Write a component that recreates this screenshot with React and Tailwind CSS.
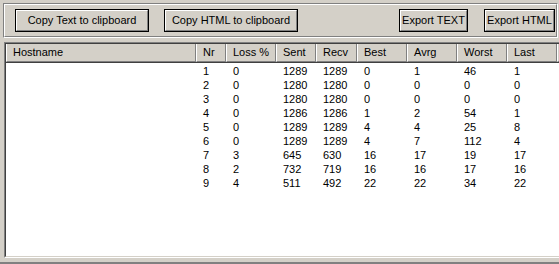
import React from "react";

const COLS = [
  { key: "host", label: "Hostname", w: "w-[190px]" },
  { key: "nr", label: "Nr", w: "w-[30px]" },
  { key: "loss", label: "Loss %", w: "w-[50px]" },
  { key: "sent", label: "Sent", w: "w-[40px]" },
  { key: "recv", label: "Recv", w: "w-[41px]" },
  { key: "best", label: "Best", w: "w-[50px]" },
  { key: "avrg", label: "Avrg", w: "w-[50px]" },
  { key: "worst", label: "Worst", w: "w-[50px]" },
  { key: "last", label: "Last", w: "w-[50px]" },
];

const ROWS = [
  ["", 1, 0, 1289, 1289, 0, 1, 46, 1],
  ["", 2, 0, 1280, 1280, 0, 0, 0, 0],
  ["", 3, 0, 1280, 1280, 0, 0, 0, 0],
  ["", 4, 0, 1286, 1286, 1, 2, 54, 1],
  ["", 5, 0, 1289, 1289, 4, 4, 25, 8],
  ["", 6, 0, 1289, 1289, 4, 7, 112, 4],
  ["", 7, 3, 645, 630, 16, 17, 19, 17],
  ["", 8, 2, 732, 719, 16, 16, 17, 16],
  ["", 9, 4, 511, 492, 22, 22, 34, 22],
];

function Button({ label, w }) {
  return (
    <div className={`${w} h-[23px] border border-black bg-[#D4D0C8]`}>
      <div className="flex h-full items-center justify-center border border-t-white border-l-white border-b-[#808080] border-r-[#808080]">
        {label}
      </div>
    </div>
  );
}

export default function App() {
  return (
    <div className="h-[264px] w-[559px] overflow-hidden bg-[#D4D0C8] text-[11px] leading-none text-black font-['Liberation_Sans',Arial,sans-serif]">
      {/* toolbar groove */}
      <div className="px-[3px] pt-[3px]">
        <div className="h-[35px] w-[555px] border border-t-[#808080] border-l-[#808080] border-b-white border-r-white">
          <div className="flex h-full items-start border border-t-white border-l-white border-b-[#808080] border-r-[#808080] pl-[10px] pt-[4px]">
            <Button label="Copy Text to clipboard" w="w-[134px]" />
            <div className="ml-[15px]">
              <Button label="Copy HTML to clipboard" w="w-[134px]" />
            </div>
            <div className="ml-[101px]">
              <Button label="Export TEXT" w="w-[69px]" />
            </div>
            <div className="ml-[16px]">
              <Button label="Export HTML" w="w-[71px]" />
            </div>
          </div>
        </div>
      </div>

      {/* list view */}
      <div className="ml-[4px] mt-[4px] h-[216px] w-[560px] border border-t-[#808080] border-l-[#808080] border-b-white border-r-white">
        <div className="h-full border border-t-[#404040] border-l-[#404040] border-b-[#D4D0C8] border-r-[#D4D0C8] bg-white">
          <div className="flex h-[19px] border-b border-b-[#404040] bg-[#D4D0C8]">
            {COLS.map((c) => (
              <div
                key={c.key}
                className={`${c.w} flex shrink-0 items-center border-l border-r border-b border-l-white border-r-[#808080] border-b-[#808080] pl-[6px]`}
              >
                {c.label}
              </div>
            ))}
            <div className="flex-1 border-l border-b border-l-white border-b-[#808080]" />
          </div>
          <div className="pt-[1px]">
            {ROWS.map((r, i) => (
              <div key={i} className="flex h-[14px] items-center">
                {r.map((v, j) => (
                  <div key={j} className={`${COLS[j].w} shrink-0 pl-[7px]`}>
                    {v}
                  </div>
                ))}
              </div>
            ))}
          </div>
        </div>
      </div>

      <div className="mt-[4px] h-[2px] w-full bg-[#808080]" />
    </div>
  );
}
